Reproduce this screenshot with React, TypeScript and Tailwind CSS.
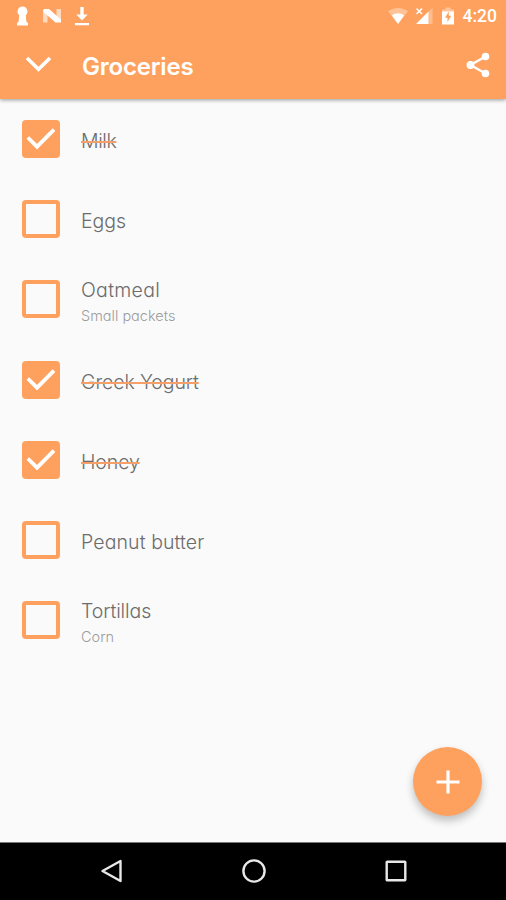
import { useState } from "react";

type Item = {
  id: number;
  name: string;
  note?: string;
  done: boolean;
  tracking: string;
};

const groceries: Item[] = [
  { id: 1, name: "Milk", done: true, tracking: "tracking-[-0.4px]" },
  { id: 2, name: "Eggs", done: false, tracking: "tracking-[0px]" },
  { id: 3, name: "Oatmeal", note: "Small packets", done: false, tracking: "tracking-[0.3px]" },
  { id: 4, name: "Greek Yogurt", done: true, tracking: "tracking-[-0.1px]" },
  { id: 5, name: "Honey", done: true, tracking: "tracking-[-0.1px]" },
  { id: 6, name: "Peanut butter", done: false, tracking: "tracking-[0.1px]" },
  { id: 7, name: "Tortillas", note: "Corn", done: false, tracking: "tracking-[-0.1px]" },
];

function StatusBar() {
  return (
    <div className="flex h-8 items-center justify-between pl-[16px] pr-[9px] text-white">
      <div className="flex items-center">
        <svg width="13" height="20" viewBox="0 0 13 20" fill="currentColor">
          <path d="M6.500 0.500a5 5 0 0 1 3.300 8.700L10.300 15.500 12 17v2.500H1V17l1.700-1.500.5-6.300A5 5 0 0 1 6.500 0.500z" />
        </svg>
        <svg width="20" height="18" viewBox="0 0 20 18" fill="currentColor" className="ml-[13px]">
          <path d="M1 3h4.500v12.500H1zM14.500 2h4.500v12h-4.500z" opacity="0.6" />
          <path d="M1.500 2h5.500l12 10.500v3h-5.500L1.500 5z" />
        </svg>
        <svg width="16" height="21" viewBox="0 0 16 21" fill="currentColor" className="ml-[12px]">
          <path d="M6.300 1h3.400v7.500h4L8 14.500 2.300 8.500h4zM1 17h14v2.200H1z" />
        </svg>
      </div>
      <div className="flex items-center">
        <svg width="20" height="18" viewBox="0 0 20 18" fill="currentColor">
          <path d="M10 1C6 1 2.500 2.300 0 4.300L10 17 20 4.300C17.500 2.300 14 1 10 1z" opacity="0.35" />
          <path d="M10 6.300c-2.400 0-4.500.8-6.100 2.200L10 17l6.100-8.500C14.500 7.100 12.400 6.300 10 6.300z" />
        </svg>
        <svg width="18" height="18" viewBox="0 0 18 18" className="ml-[7px]">
          <path d="M17.500 1v16h-4V4.500z" fill="#fff" opacity="0.3" />
          <path d="M13.500 4.500V17H1z" fill="#fff" />
          <path d="M1.500 1.500l5.500 5.500M7 1.500L1.500 7" stroke="#fff" strokeWidth="1.500" />
        </svg>
        <svg width="14" height="18" viewBox="0 0 14 18" className="ml-[8px]">
          <path d="M4.500 0.500h5V2.500H13V6H1V2.500h3.500z" fill="#fff" opacity="0.4" />
          <path d="M1 4.500h12v13H1z" fill="#fff" />
          <path d="M7.800 4.500L4 10.800h2.500v4.200l3.800-6.200H7.800z" fill="#ffa15e" />
        </svg>
        <span className="ml-[8px] mt-[2px] font-[Roboto,sans-serif] text-[17.5px] font-medium leading-none">
          4:20
        </span>
      </div>
    </div>
  );
}

function Checkbox({ checked }: { checked: boolean }) {
  return (
    <span
      className={`flex size-[38px] shrink-0 items-center justify-center rounded-[4px] border-4 border-[#ffa15e] ${
        checked ? "bg-[#ffa15e]" : "bg-transparent"
      }`}
    >
      {checked && (
        <svg width="30" height="30" viewBox="0 0 30 30" fill="none" className="shrink-0">
          <path d="M1.800 13.500L11 22.700 28 5.700" stroke="#fff" strokeWidth="3.800" />
        </svg>
      )}
    </span>
  );
}

export default function App() {
  const [items, setItems] = useState(groceries);

  const toggle = (id: number) =>
    setItems(items.map((i) => (i.id === id ? { ...i, done: !i.done } : i)));

  return (
    <div className="flex h-[900px] w-[506px] flex-col overflow-hidden bg-[#fafafa] font-[Inter,sans-serif] [font-feature-settings:'cv11']">
      <header className="relative h-[99px] shrink-0 bg-[#ffa15e] shadow-[0_1px_4px_rgba(0,0,0,0.4)]">
        <StatusBar />
        <div className="flex h-[67px] items-center pl-[25px] pr-[16.5px] text-white">
          <svg width="27" height="18" viewBox="0 0 27 18" fill="none" className="-mt-[3px]">
            <path d="M2 3l11.500 11.300L25 3" stroke="currentColor" strokeWidth="3.600" />
          </svg>
          <h1 className="ml-[30px] mt-[2px] text-[24px] font-semibold leading-none tracking-[-0.2px]">
            Groceries
          </h1>
          <button type="button" className="-mt-[2px] ml-auto">
            <svg width="24" height="26" viewBox="0 0 24 26" fill="currentColor">
              <path d="M19.500 4.500L4.500 13l15 8.500" fill="none" stroke="currentColor" strokeWidth="2.400" />
              <circle cx="19.500" cy="4.500" r="3.800" />
              <circle cx="4.500" cy="13" r="3.900" />
              <circle cx="19.500" cy="21.500" r="3.800" />
            </svg>
          </button>
        </div>
      </header>

      <main className="relative grow">
        <ul>
          {items.map((item) => (
            <li
              key={item.id}
              className="flex h-[80.2px] cursor-pointer items-center pl-[22px]"
              onClick={() => toggle(item.id)}
            >
              <Checkbox checked={item.done} />
              <div className={`ml-[21px] ${item.note ? "pt-[7px]" : "pt-[4px]"}`}>
                <p
                  className={`w-fit text-[19.5px] font-light leading-[26px] text-[#6c6c6c] ${item.tracking} ${
                    item.done ? "line-through decoration-[#f5a06a] decoration-[1.5px]" : ""
                  }`}
                >
                  {item.name}
                </p>
                {item.note && (
                  <p className="w-fit text-[14.5px] font-light leading-[25px] text-[#9c9c9c]">
                    {item.note}
                  </p>
                )}
              </div>
            </li>
          ))}
        </ul>
        <button
          type="button"
          className="absolute bottom-[25.5px] right-[24px] flex size-[69px] items-center justify-center rounded-full bg-[#ffa15e] shadow-[0_5px_8px_rgba(0,0,0,0.24)]"
        >
          <svg width="24" height="24" viewBox="0 0 24 24">
            <path d="M12 0.500v23M0.500 12h23" stroke="#fff" strokeWidth="3.200" />
          </svg>
        </button>
      </main>

      <nav className="flex h-[58.500px] shrink-0 items-center justify-between border-t border-[#777] bg-black pl-[100px] pr-[99px]">
        <svg width="23" height="26" viewBox="0 0 23 26" fill="none">
          <path d="M20.500 3v20L2.500 13z" stroke="#e8e8e8" strokeWidth="2.400" strokeLinejoin="round" />
        </svg>
        <svg width="26" height="26" viewBox="0 0 26 26" fill="none">
          <circle cx="13" cy="13" r="10.600" stroke="#e8e8e8" strokeWidth="2.400" />
        </svg>
        <svg width="22" height="22" viewBox="0 0 22 22" fill="none">
          <rect x="1.700" y="1.700" width="18.600" height="18.600" rx="0.500" stroke="#e8e8e8" strokeWidth="2.400" />
        </svg>
      </nav>
    </div>
  );
}
